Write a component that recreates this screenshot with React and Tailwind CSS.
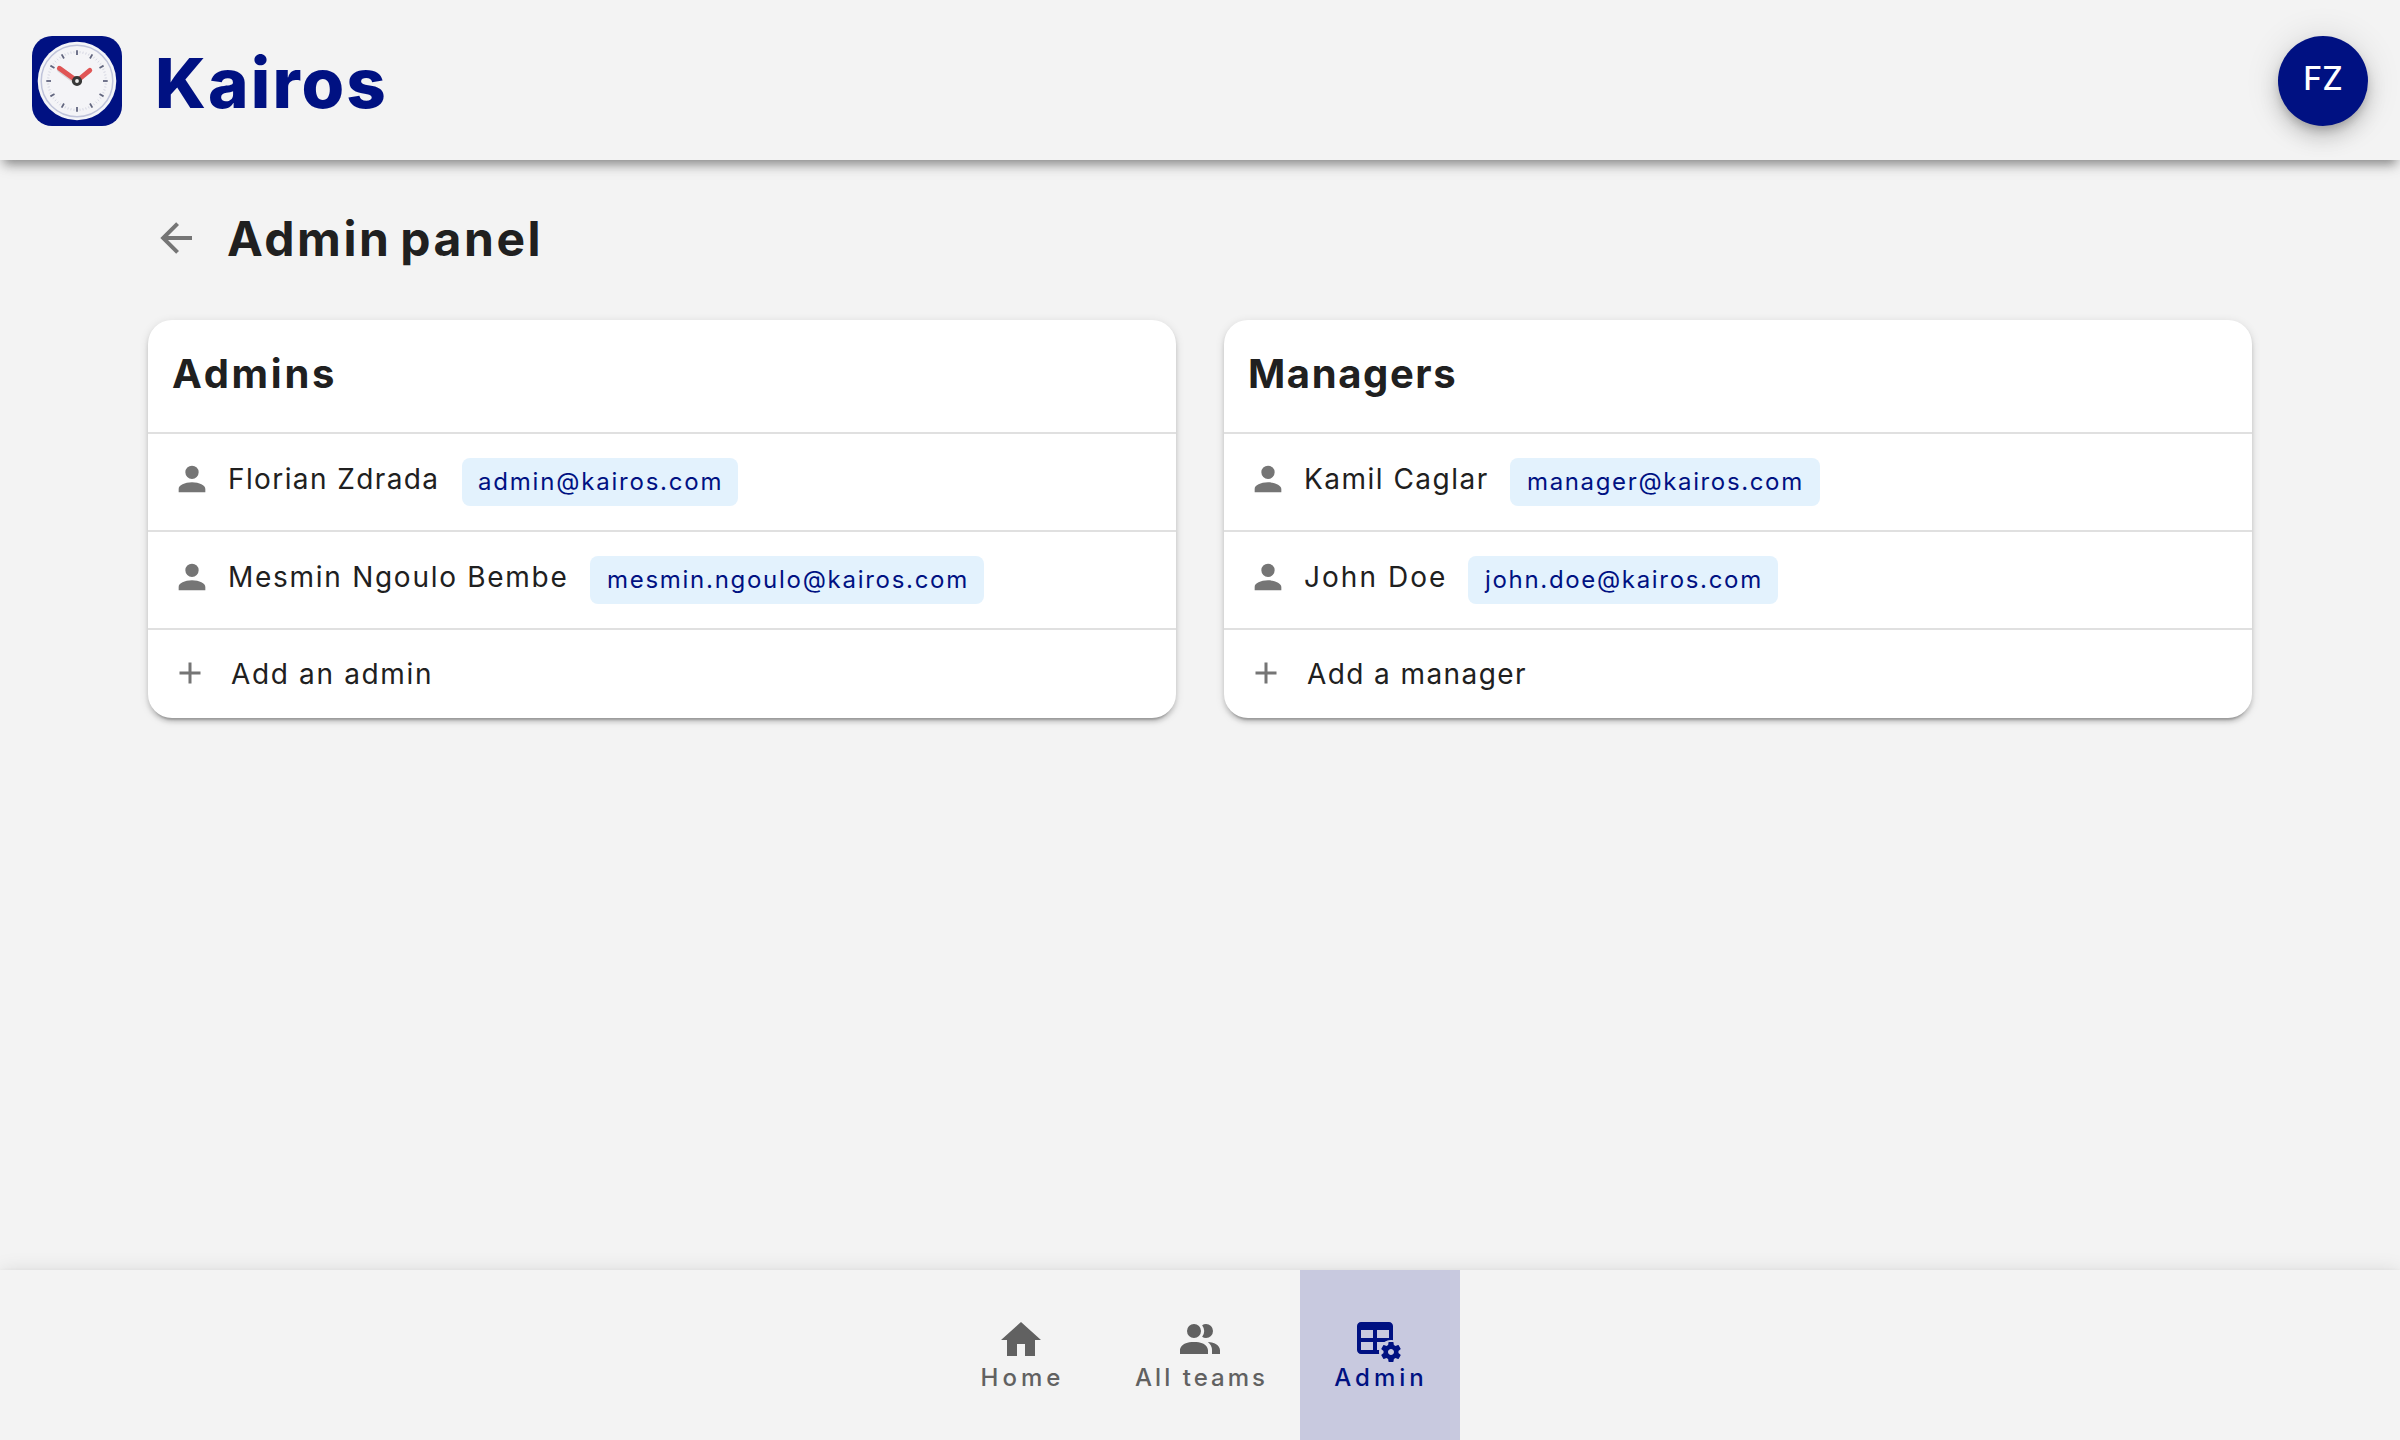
import React from 'react';

const paths = {
  back: 'M20,11V13H8L13.5,18.5L12.08,19.92L4.16,12L12.08,4.08L13.5,5.5L8,11H20Z',
  account: 'M12,4A4,4 0 0,1 16,8A4,4 0 0,1 12,12A4,4 0 0,1 8,8A4,4 0 0,1 12,4M12,14C16.42,14 20,15.79 20,18V20H4V18C4,15.79 7.58,14 12,14Z',
  plus: 'M19,13H13V19H11V13H5V11H11V5H13V11H19V13Z',
  home: 'M10,20V14H14V20H19V12H22L12,3L2,12H5V20H10Z',
  teams:
    'M16 17V19H2V17S2 13 9 13 16 17 16 17M12.5 7.5A3.5 3.5 0 1 0 9 11A3.5 3.5 0 0 0 12.5 7.5M15.94 13A5.32 5.32 0 0 1 18 17V19H22V17S22 13.37 15.94 13M15 4A3.39 3.39 0 0 0 13.07 4.59A5 5 0 0 1 13.07 10.41A3.39 3.39 0 0 0 15 11A3.5 3.5 0 0 0 15 4Z',
  table:
    'M4 3H18C19.11 3 20 3.9 20 5V12.08C18.45 11.82 16.92 12.18 15.68 13H12V17H13.08C12.97 17.68 12.97 18.35 13.08 19H4C2.9 19 2 18.11 2 17V5C2 3.9 2.9 3 4 3M4 7V11H10V7H4M12 7V11H18V7H12M4 13V17H10V13H4Z',
  gear:
    'M22.78 19.32L21.71 18.5C21.73 18.33 21.75 18.17 21.75 18S21.74 17.67 21.71 17.5L22.77 16.68C22.86 16.6 22.89 16.47 22.83 16.36L21.83 14.63C21.77 14.5 21.64 14.5 21.5 14.5L20.28 15C20 14.82 19.74 14.65 19.43 14.53L19.24 13.21C19.23 13.09 19.12 13 19 13H17C16.88 13 16.77 13.09 16.75 13.21L16.56 14.53C16.26 14.66 15.97 14.82 15.71 15L14.47 14.5C14.36 14.5 14.23 14.5 14.16 14.63L13.16 16.36C13.1 16.47 13.12 16.6 13.22 16.68L14.28 17.5C14.26 17.67 14.25 17.83 14.25 18S14.26 18.33 14.28 18.5L13.22 19.32C13.13 19.4 13.1 19.53 13.16 19.64L14.16 21.37C14.22 21.5 14.35 21.5 14.47 21.5L15.71 21C15.97 21.18 16.25 21.35 16.56 21.47L16.75 22.79C16.77 22.91 16.87 23 17 23H19C19.12 23 19.23 22.91 19.25 22.79L19.44 21.47C19.74 21.34 20 21.18 20.28 21L21.5 21.5C21.64 21.5 21.77 21.5 21.84 21.37L22.84 19.64C22.9 19.53 22.87 19.4 22.78 19.32M18 19.5C17.17 19.5 16.5 18.83 16.5 18S17.18 16.5 18 16.5 19.5 17.17 19.5 18 18.84 19.5 18 19.5Z',
};

function Icon({ d, className }) {
  return (
    <svg viewBox="0 0 24 24" fill="currentColor" className={'shrink-0 ' + className}>
      <path d={d} />
    </svg>
  );
}

function AdminIcon() {
  return (
    <svg viewBox="0 0 24 24" fill="currentColor" className="mr-1.5 size-12 shrink-0">
      <path d={paths.table} />
      <circle cx="19" cy="18" r="5.7" fill="#c8c9df" />
      <path d={paths.gear} transform="translate(1 0)" />
    </svg>
  );
}

function ClockLogo() {
  const ticks = Array.from({ length: 60 }, (_, i) => i);
  return (
    <svg viewBox="0 0 90 90" className="size-[90px] shrink-0">
      <rect width="90" height="90" rx="20" fill="#001182" />
      <circle cx="45" cy="45" r="39.3" fill="#f3f4f8" />
      <circle cx="45" cy="45" r="35.8" fill="#f4f4f7" stroke="#c0c4da" strokeWidth="1.5" />
      {ticks.map((i) => (
        <line
          key={i}
          x1="45"
          x2="45"
          y1={i % 5 ? 15 : 14.3}
          y2={i % 5 ? 17.2 : 19}
          stroke={i % 5 ? '#cfd1de' : '#62667f'}
          strokeWidth={i % 5 ? 0.8 : 1.8}
          transform={`rotate(${i * 6} 45 45)`}
        />
      ))}
      <path d="M45 46L28 33.5" stroke="#000" strokeOpacity="0.12" strokeWidth="6" strokeLinecap="round" />
      <path d="M45 45L27.3 32.3M45 45L57.8 34.3" stroke="#e05555" strokeWidth="4.8" strokeLinecap="round" />
      <circle cx="45" cy="45" r="3.5" fill="#eee" stroke="#383838" strokeWidth="3.2" />
    </svg>
  );
}

function Panel({ title, titleClass, people, action, actionClass }) {
  return (
    <section className="h-[398px] w-[1028px] rounded-[24px] bg-white shadow-[0_6px_2px_-4px_rgba(0,0,0,0.2),0_4px_4px_0_rgba(0,0,0,0.14),0_2px_10px_0_rgba(0,0,0,0.12)]">
      <h2 className={'h-28 px-6 pb-1 text-[40px] leading-[108px] font-bold ' + titleClass}>{title}</h2>
      {people.map((p) => (
        <div key={p.name} className="flex h-[98px] items-center border-t-2 border-[#e0e0e0] px-6">
          <Icon d={paths.account} className="mb-1.5 size-10 text-[#757575]" />
          <span className={'mb-1.5 ml-4 shrink-0 text-[28px] leading-10 whitespace-nowrap ' + p.nameClass}>{p.name}</span>
          <span className={'h-12 shrink-0 rounded-lg bg-[#e3f2fd] text-2xl leading-[47px] whitespace-nowrap text-[#001182] ' + p.mailClass}>
            {p.mail}
          </span>
        </div>
      ))}
      <div className="flex h-[90px] items-center border-t-2 border-[#e0e0e0] px-6">
        <Icon d={paths.plus} className="mb-[3px] size-9 text-[#757575]" />
        <span className={'ml-[23px] text-[28px] leading-10 ' + actionClass}>{action}</span>
      </div>
    </section>
  );
}

export default function App() {
  return (
    <div className="flex h-[1440px] w-[2400px] flex-col overflow-hidden bg-[#f3f3f3] font-[Inter,sans-serif] text-[#202020]">
      <header className="z-10 flex h-40 shrink-0 items-center justify-between bg-[#f3f3f3] px-8 pt-0.5 shadow-[0_8px_10px_-4px_rgba(0,0,0,0.36),0_6px_16px_-2px_rgba(0,0,0,0.14)]">
        <div className="flex items-center gap-[33px]">
          <ClockLogo />
          <h1 className="mt-1 text-[69px] leading-[80px] font-extrabold tracking-[2.1px] text-[#001182]">Kairos</h1>
        </div>
        <div className="flex size-[90px] items-center justify-center rounded-full bg-[#001182] pb-1 text-[32px] font-medium text-white shadow-[0_6px_10px_-2px_rgba(0,0,0,0.2),0_12px_20px_0_rgba(0,0,0,0.14),0_2px_36px_0_rgba(0,0,0,0.12)]">
          FZ
        </div>
      </header>

      <main className="flex-1 px-[148px]">
        <div className="flex h-40 items-center pb-[3px] pl-1">
          <Icon d={paths.back} className="mb-0.5 size-12 text-[#757575]" />
          <h1 className="ml-[27px] text-[48px] leading-[60px] font-bold tracking-[2.54px] [word-spacing:-5px]">Admin panel</h1>
        </div>
        <div className="flex gap-12">
          <Panel
            title="Admins"
            titleClass="tracking-[2.72px]"
            action="Add an admin"
            actionClass="tracking-[1.65px]"
            people={[
              { name: 'Florian Zdrada', nameClass: 'w-[234px] tracking-[1.4px]', mail: 'admin@kairos.com', mailClass: 'w-[276px] pl-4 tracking-[1.8px]' },
              { name: 'Mesmin Ngoulo Bembe', nameClass: 'w-[362px] tracking-[1.72px]', mail: 'mesmin.ngoulo@kairos.com', mailClass: 'w-[394px] pl-[17px] tracking-[1.72px]' },
            ]}
          />
          <Panel
            title="Managers"
            titleClass="tracking-[1.6px]"
            action="Add a manager"
            actionClass="tracking-[1.41px]"
            people={[
              { name: 'Kamil Caglar', nameClass: 'w-[206px] tracking-[1.48px]', mail: 'manager@kairos.com', mailClass: 'w-[310px] pl-[17px] tracking-[1.64px]' },
              { name: 'John Doe', nameClass: 'w-[164px] tracking-[2.05px]', mail: 'john.doe@kairos.com', mailClass: 'w-[310px] pl-[17px] tracking-[1.68px]' },
            ]}
          />
        </div>
      </main>

      <nav className="z-10 flex h-[170px] shrink-0 bg-[#f3f3f3] pl-[942px] text-2xl leading-[28px] font-medium text-[#616161] shadow-[0_4px_8px_-2px_rgba(0,0,0,0.2),0_8px_10px_0_rgba(0,0,0,0.14),0_2px_20px_0_rgba(0,0,0,0.12)]">
        <div className="flex w-[158px] flex-col items-center pt-[46px]">
          <Icon d={paths.home} className="size-12" />
          <span className="-mr-[3px] tracking-[4px]">Home</span>
        </div>
        <div className="flex w-[200px] flex-col items-center pt-[46px]">
          <Icon d={paths.teams} className="size-12" />
          <span className="-mr-[3px] tracking-[3.04px]">All teams</span>
        </div>
        <div className="flex w-40 flex-col items-center bg-[#c8c9df] pt-[46px] text-[#001182]">
          <AdminIcon />
          <span className="-mr-0.5 tracking-[4.05px]">Admin</span>
        </div>
      </nav>
    </div>
  );
}
